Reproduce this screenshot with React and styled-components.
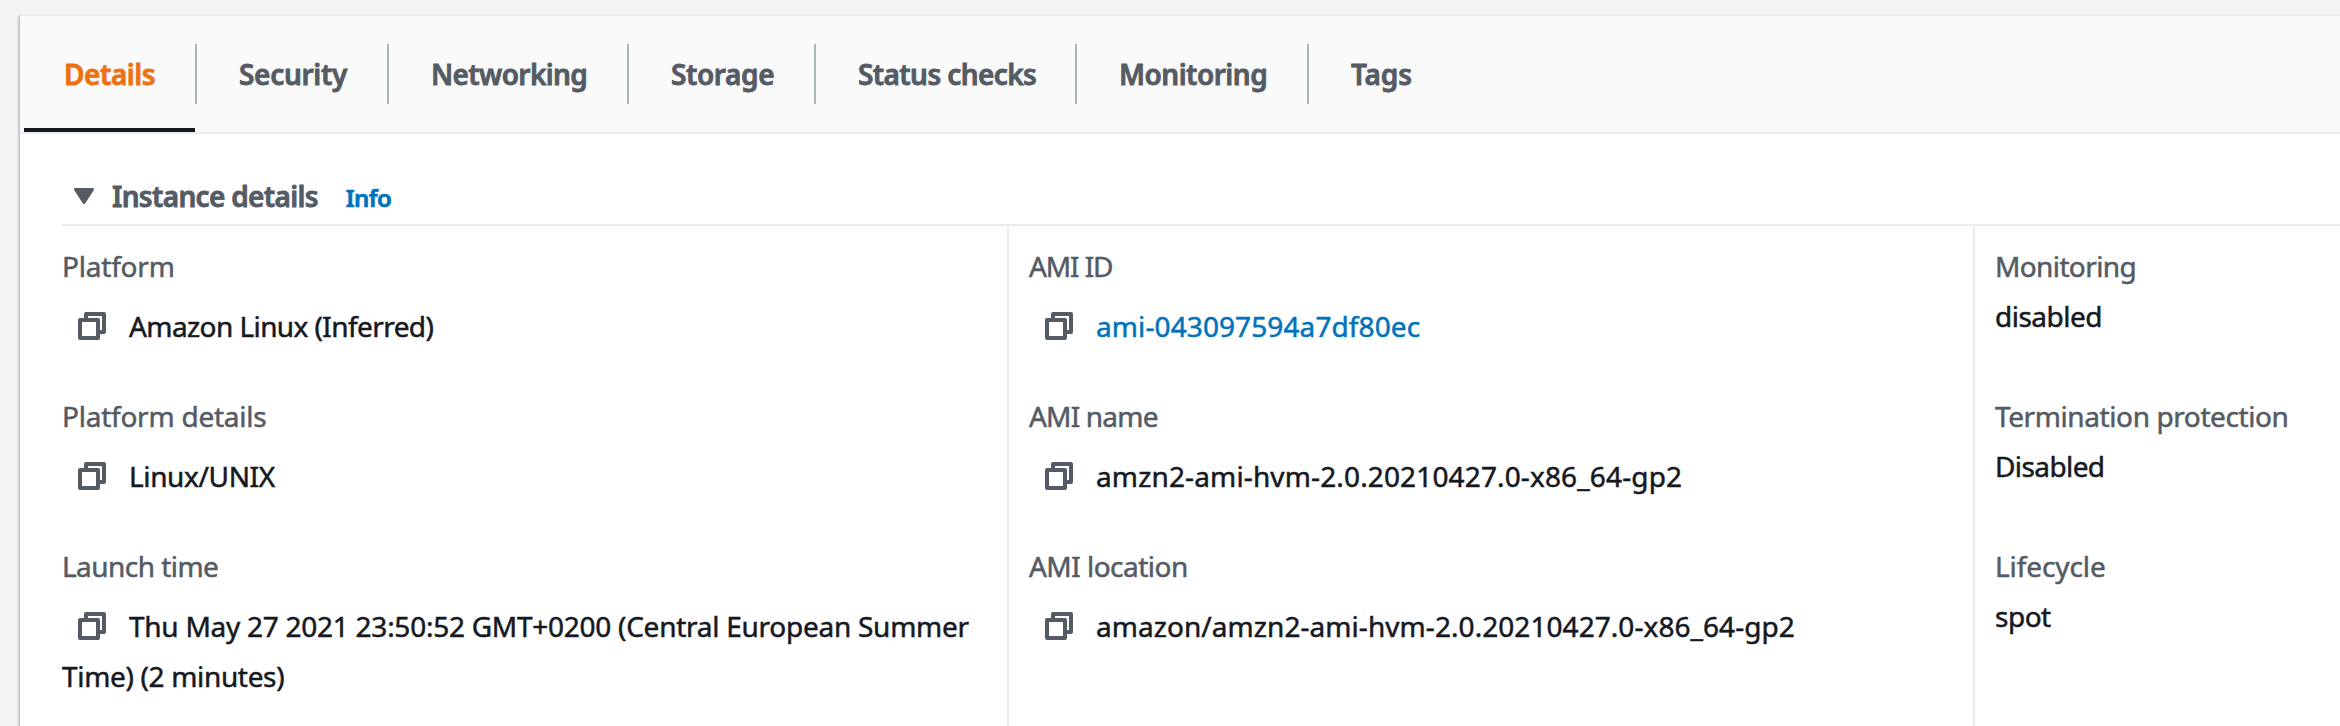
import React from "react";
import styled, { createGlobalStyle } from "styled-components";

const ink = "#16191f";
const muted = "#545b64";
const link = "#0073bb";
const divider = "#eaeded";

const GlobalStyle = createGlobalStyle`
  *, *::before, *::after { box-sizing: border-box; }
  body {
    margin: 0;
    background: #f2f3f3;
    font-family: "Noto Sans", "Open Sans", sans-serif;
    font-size: 28px;
    color: ${ink};
  }
`;

const Page = styled.div`
  height: 726px;
  padding: 14px 0 0 20px;
  overflow: hidden;
`;

const Panel = styled.section`
  width: 2400px;
  height: 800px;
  background: #fff;
  border-top: 2px solid ${divider};
  box-shadow:
    0 2px 2px 0 rgba(0, 28, 36, 0.3),
    2px 2px 2px 0 rgba(0, 28, 36, 0.15),
    -2px 2px 2px 0 rgba(0, 28, 36, 0.15);
`;

const TabBar = styled.nav`
  display: flex;
  height: 118px;
  padding-left: 4px;
  background: #fafafa;
  border-bottom: 2px solid ${divider};
`;

const Tab = styled.a`
  position: relative;
  display: flex;
  align-items: center;
  width: ${(p) => p.$width}px;
  padding-left: 42px;
  white-space: nowrap;
  font-weight: 600;
  letter-spacing: ${(p) => p.$track}px;
  color: ${(p) => (p.$active ? "#ec7211" : muted)};
  -webkit-text-stroke: 0.8px currentColor;

  &:first-child {
    padding-left: 40px;
  }

  &:not(:last-child)::before {
    content: "";
    position: absolute;
    top: 28px;
    right: 0;
    width: 2px;
    height: 60px;
    background: #aab7b8;
  }

  &::after {
    content: "";
    display: ${(p) => (p.$active ? "block" : "none")};
    position: absolute;
    left: 0;
    right: 2px;
    bottom: 0;
    height: 4px;
    background: ${ink};
  }
`;

const Content = styled.div`
  margin-left: 42px;
`;

const SectionHeader = styled.header`
  display: flex;
  align-items: baseline;
  height: 92px;
  padding: 42px 0 0 12px;
  line-height: 40px;
  border-bottom: 2px solid ${divider};
`;

const Caret = styled.svg`
  width: 20px;
  height: 16px;
  margin-right: 18px;
  align-self: flex-start;
  margin-top: 12px;
`;

const SectionTitle = styled.h2`
  margin: 0;
  font-size: 28px;
  font-weight: 600;
  letter-spacing: -0.68px;
  color: ${muted};
  -webkit-text-stroke: 0.8px currentColor;
`;

const InfoLink = styled.a`
  margin-left: 28px;
  font-size: 24px;
  font-weight: 600;
  letter-spacing: -0.6px;
  color: ${link};
  -webkit-text-stroke: 0.7px currentColor;
`;

const Columns = styled.div`
  display: grid;
  grid-template-columns: 945px 966px 1fr;
`;

const Column = styled.div`
  display: grid;
  grid-auto-rows: 150px;
  height: 560px;
  padding-top: 15px;
  padding-left: 20px;
  border-left: 2px solid ${divider};

  &:first-child {
    padding-left: 0;
    border-left: 0;
  }
`;

const Field = styled.div`
  line-height: 50px;
  white-space: nowrap;
  -webkit-text-stroke: 0.5px currentColor;
`;

const Label = styled.div`
  letter-spacing: ${(p) => p.$track}px;
  color: ${muted};
`;

const Value = styled.div`
  padding-top: ${(p) => (p.$copy ? 10 : 0)}px;
  letter-spacing: ${(p) => p.$track}px;
  color: ${(p) => (p.$link ? link : ink)};
`;

const Line = styled.span`
  letter-spacing: ${(p) => p.$track}px;
`;

const Copy = styled.svg`
  width: 28px;
  height: 28px;
  margin: 0 23px 0 16px;
  vertical-align: -3px;
  fill: none;
  stroke: ${muted};
  stroke-width: 4;
  stroke-linejoin: round;
`;

const CopyIcon = () => (
  <Copy viewBox="0 0 28 28">
    <path d="M8 7V2h18v18h-5" />
    <rect x="2" y="8" width="18" height="18" />
  </Copy>
);

const tabs = [
  { name: "Details", width: 173, track: -0.45, active: true },
  { name: "Security", width: 192, track: -0.3 },
  { name: "Networking", width: 240, track: -0.62 },
  { name: "Storage", width: 187, track: -0.4 },
  { name: "Status checks", width: 261, track: -0.6 },
  { name: "Monitoring", width: 232, track: -0.5 },
  { name: "Tags", width: 140, track: -0.1 },
];

const columns = [
  [
    { label: "Platform", lt: -0.2, value: "Amazon Linux (Inferred)", vt: -0.58, copy: true },
    { label: "Platform details", lt: -0.24, value: "Linux/UNIX", vt: -0.36, copy: true },
    {
      label: "Launch time",
      lt: -0.55,
      value: "Thu May 27 2021 23:50:52 GMT+0200 (Central European Summer",
      vt: -0.26,
      rest: "Time) (2 minutes)",
      copy: true,
    },
  ],
  [
    { label: "AMI ID", lt: -1.1, value: "ami-043097594a7df80ec", vt: 0.1, copy: true, link: true },
    { label: "AMI name", lt: -0.8, value: "amzn2-ami-hvm-2.0.20210427.0-x86_64-gp2", vt: 0.14, copy: true },
    { label: "AMI location", lt: -0.52, value: "amazon/amzn2-ami-hvm-2.0.20210427.0-x86_64-gp2", vt: 0.06, copy: true },
  ],
  [
    { label: "Monitoring", lt: -0.62, value: "disabled", vt: -0.5 },
    { label: "Termination protection", lt: -0.4, value: "Disabled", vt: -0.6 },
    { label: "Lifecycle", lt: -0.1, value: "spot", vt: -0.5 },
  ],
];

export default function App() {
  return (
    <>
      <GlobalStyle />
      <Page>
        <Panel>
          <TabBar>
            {tabs.map((t) => (
              <Tab key={t.name} $width={t.width} $track={t.track} $active={t.active}>
                {t.name}
              </Tab>
            ))}
          </TabBar>
          <Content>
            <SectionHeader>
              <Caret viewBox="0 0 20 16">
                <path d="M1.5 1.5h17L10 14.5z" fill={muted} stroke={muted} strokeWidth="3" strokeLinejoin="round" />
              </Caret>
              <SectionTitle>Instance details</SectionTitle>
              <InfoLink>Info</InfoLink>
            </SectionHeader>
            <Columns>
              {columns.map((fields, i) => (
                <Column key={i}>
                  {fields.map((f) => (
                    <Field key={f.label}>
                      <Label $track={f.lt}>{f.label}</Label>
                      <Value $copy={f.copy} $link={f.link} $track={f.vt}>
                        {f.copy && <CopyIcon />}
                        {f.value}
                        {f.rest && (
                          <>
                            <br />
                            <Line $track={-0.33}>{f.rest}</Line>
                          </>
                        )}
                      </Value>
                    </Field>
                  ))}
                </Column>
              ))}
            </Columns>
          </Content>
        </Panel>
      </Page>
    </>
  );
}
